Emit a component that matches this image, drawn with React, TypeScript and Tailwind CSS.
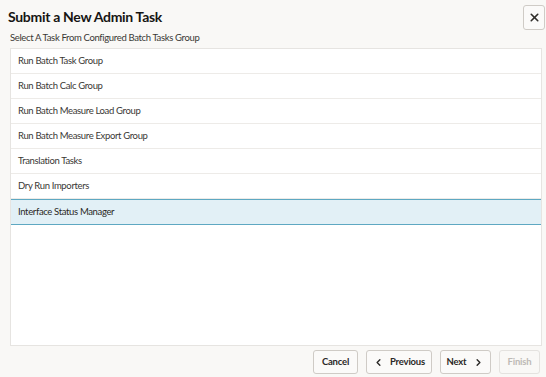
import { ChevronLeft, ChevronRight, X } from "lucide-react";

const tasks = [
  "Run Batch Task Group",
  "Run Batch Calc Group",
  "Run Batch Measure Load Group",
  "Run Batch Measure Export Group",
  "Translation Tasks",
  "Dry Run Importers",
  "Interface Status Manager",
];

export default function App() {
  return (
    <div
      className="flex h-[377px] w-[546px] flex-col bg-[#f9f8f6] text-[#161513]"
      style={{ fontFamily: 'Lato, "Noto Sans", sans-serif' }}
    >
      <div className="flex items-start justify-between pl-[8px] pr-[1px] pt-[5px]">
        <h1 className="pt-[2px] text-[14px] font-bold leading-[20px] tracking-[-0.3px]">Submit a New Admin Task</h1>
        <button className="flex h-[25px] w-[22px] items-center justify-center rounded-[3px] border border-[#cfcbc6] bg-[#fbfaf9]">
          <X size={13} strokeWidth={3} className="text-[#2f2d2a]" />
        </button>
      </div>
      <p className="mt-[1px] pl-[10px] text-[9.5px] leading-[14px] tracking-[-0.35px] text-[#3a3835]">
        Select A Task From Configured Batch Tasks Group
      </p>
      <div className="ml-[10px] mr-[4px] mt-[3px] h-[298px] border border-[#e6e4e1] bg-white">
        {tasks.map((t, i) => {
          const selected = i === tasks.length - 1;
          return (
            <div
              key={t}
              className={
                selected
                  ? "flex h-[26px] items-center border-y border-[#5ea8c2] bg-[#e2f0f6] pl-[7px] text-[9.5px] tracking-[-0.35px] text-[#2a2826]"
                  : "flex h-[25px] items-center border-b border-[#edebe8] pl-[7px] text-[9.5px] tracking-[-0.35px] text-[#3a3835]"
              }
            >
              {t}
            </div>
          );
        })}
      </div>
      <div className="flex justify-end gap-[8px] pr-[6px] pt-[4px]">
        <button className="h-[24px] w-[45px] rounded-[3px] border border-[#cfcbc6] bg-[#fbfaf9] text-[9.5px] font-bold tracking-[-0.2px] text-[#2a2826]">
          Cancel
        </button>
        <button className="flex h-[24px] w-[66px] items-center justify-center gap-[6px] rounded-[3px] border border-[#cfcbc6] bg-[#fbfaf9] text-[9.5px] font-bold tracking-[-0.2px] text-[#2a2826]">
          <ChevronLeft size={11} strokeWidth={3} />
          Previous
        </button>
        <button className="flex h-[24px] w-[51px] items-center justify-center gap-[7px] rounded-[3px] border border-[#cfcbc6] bg-[#fbfaf9] text-[9.5px] font-bold tracking-[-0.2px] text-[#2a2826]">
          Next
          <ChevronRight size={11} strokeWidth={3} />
        </button>
        <button className="h-[24px] w-[41px] rounded-[3px] border border-[#e4e2df] bg-[#f9f8f6] text-[9.5px] font-bold tracking-[-0.2px] text-[#bdbab5]">
          Finish
        </button>
      </div>
    </div>
  );
}
